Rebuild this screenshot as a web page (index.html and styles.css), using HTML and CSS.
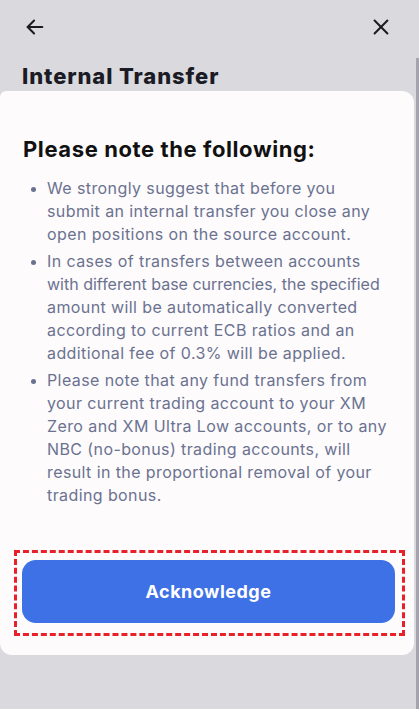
FILE: index.html
```html
<!DOCTYPE html>
<html lang="en">
<head>
  <meta charset="UTF-8" />
  <meta name="viewport" content="width=device-width, initial-scale=1.0"/>
  <title>Internal Transfer</title>
  <link rel="stylesheet" href="styles.css">
</head>
<body>
  <div class="screen">
    <div class="topbar">
      <button class="icon-btn" aria-label="Back">
        <svg width="22" height="22" viewBox="0 0 24 24" fill="none" stroke="#1b1b22" stroke-width="2.2" stroke-linecap="round" stroke-linejoin="round">
          <path d="M20 12H4"/>
          <path d="M11 5l-7 7 7 7"/>
        </svg>
      </button>
      <button class="icon-btn" aria-label="Close">
        <svg width="22" height="22" viewBox="0 0 24 24" fill="none" stroke="#1b1b22" stroke-width="2.2" stroke-linecap="round">
          <path d="M5 5l14 14"/>
          <path d="M19 5L5 19"/>
        </svg>
      </button>
    </div>
    <h1 class="page-title">Internal Transfer</h1>

    <div class="sheet">
      <h2>Please note the following:</h2>
      <ul class="notes">
        <li>We strongly suggest that before you submit an internal transfer you close any open positions on the source account.</li>
        <li>In cases of transfers between accounts <span class="keep">with different base currencies, the specified</span> amount will be automatically converted according to current ECB ratios and an additional fee of 0.3% will be applied.</li>
        <li>Please note that any fund transfers from your current trading account to your XM Zero and XM Ultra Low accounts, or to any NBC (no-bonus) trading accounts, will result in the proportional removal of your trading bonus.</li>
      </ul>
      <div class="action">
        <button class="ack">Acknowledge</button>
      </div>
    </div>

    <div class="scroll-thumb"></div>
  </div>
</body>
</html>
```

FILE: styles.css
```css
body {
  margin: 0;
  padding: 0;
  font-family: Inter, "Open Sans", sans-serif;
  background-color: #d9d9de;
}
.screen {
  position: relative;
  height: 709px;
  overflow: hidden;
}
.topbar {
  display: flex;
  justify-content: space-between;
  align-items: center;
  padding: 14px 27px 0 24px;
  height: 26px;
}
.icon-btn {
  background: none;
  border: none;
  padding: 0;
  width: 22px;
  height: 22px;
  cursor: pointer;
}
.page-title {
  margin: 22px 0 0 22px;
  font-size: 22px;
  font-weight: 800;
  letter-spacing: 0.9px;
  color: #1b1b25;
  line-height: 28px;
}
.sheet {
  margin-top: 1px;
  width: 414px;
  box-sizing: border-box;
  background-color: #fdfbfc;
  border-radius: 6px 12px 12px 12px;
  padding: 43px 22px 19px 22px;
}
h2 {
  margin: 0 0 13px 1px;
  font-size: 22px;
  font-weight: 700;
  letter-spacing: 0.6px;
  color: #111111;
  line-height: 30px;
}
.notes {
  margin: 0;
  padding-left: 25px;
  color: #6b7290;
  font-size: 16px;
  letter-spacing: 0.4px;
  line-height: 23px;
}
.notes li {
  margin-bottom: 4px;
}
.notes li::marker {
  font-size: 14px;
}
.notes .keep {
  white-space: nowrap;
  letter-spacing: 0;
}
.action {
  margin: 43px 0 0 -8px;
  width: 373px;
  padding: 7px 7px 10px 5px;
  border: 3px dashed #e8202a;
}
.ack {
  width: 100%;
  height: 63px;
  border: none;
  border-radius: 14px;
  background-color: #3e70e6;
  color: #ffffff;
  font-family: inherit;
  font-size: 18px;
  font-weight: 700;
  letter-spacing: 0.5px;
  cursor: pointer;
}
.scroll-thumb {
  position: absolute;
  right: 0;
  top: 58px;
  width: 3px;
  height: 651px;
  background-color: #a3a4b0;
}
```
